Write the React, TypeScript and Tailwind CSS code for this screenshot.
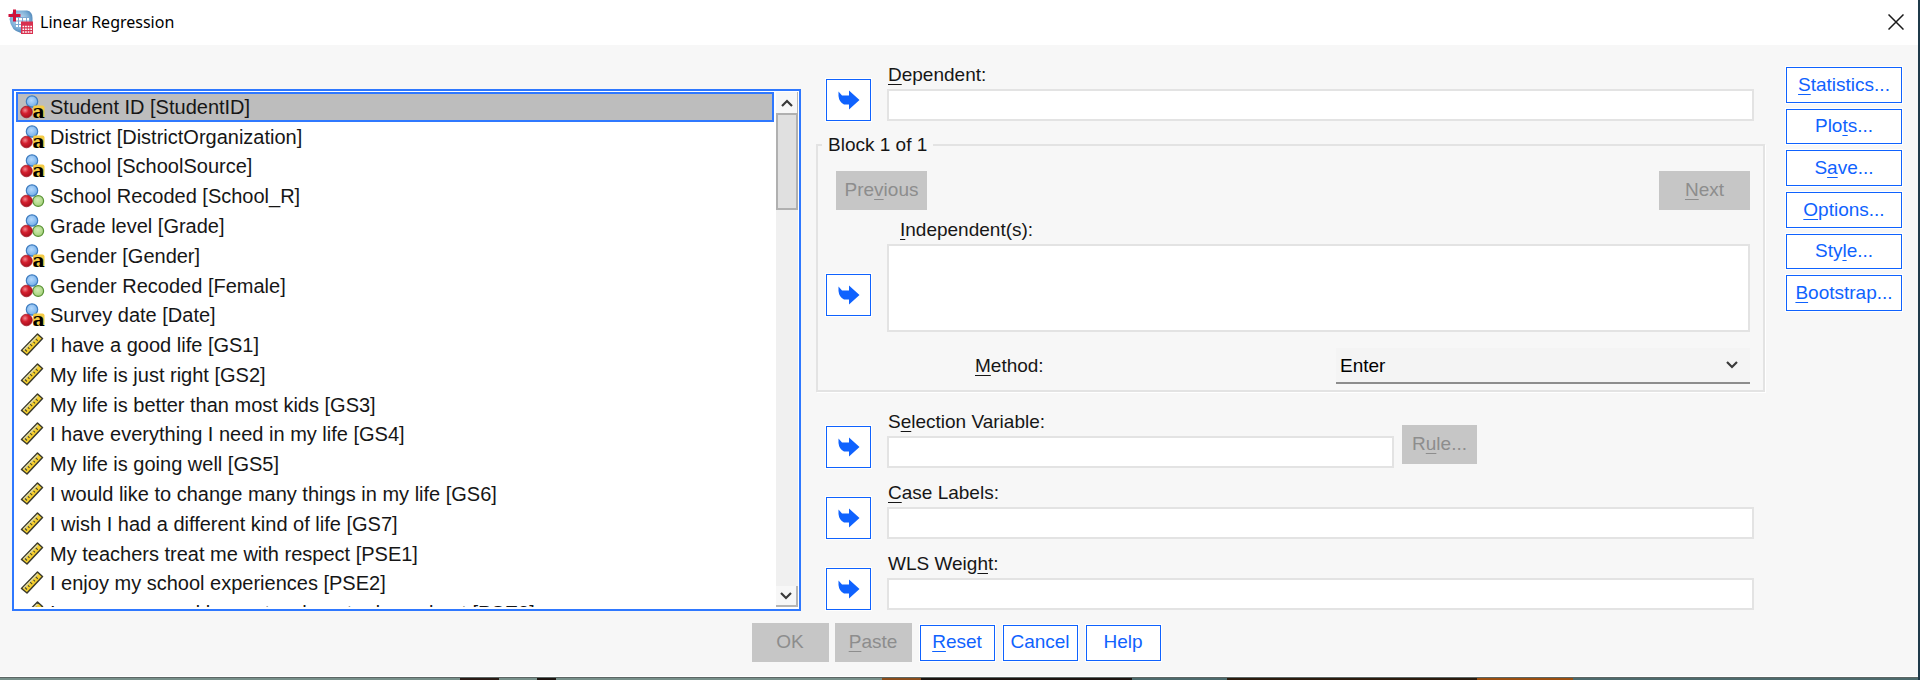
import React, { useState } from "react";

type Kind = "string" | "nominal" | "scale";

const variables: { kind: Kind; label: string }[] = [
  { kind: "string", label: "Student ID [StudentID]" },
  { kind: "string", label: "District [DistrictOrganization]" },
  { kind: "string", label: "School [SchoolSource]" },
  { kind: "nominal", label: "School Recoded [School_R]" },
  { kind: "nominal", label: "Grade level [Grade]" },
  { kind: "string", label: "Gender [Gender]" },
  { kind: "nominal", label: "Gender Recoded [Female]" },
  { kind: "string", label: "Survey date [Date]" },
  { kind: "scale", label: "I have a good life [GS1]" },
  { kind: "scale", label: "My life is just right [GS2]" },
  { kind: "scale", label: "My life is better than most kids [GS3]" },
  { kind: "scale", label: "I have everything I need in my life [GS4]" },
  { kind: "scale", label: "My life is going well [GS5]" },
  { kind: "scale", label: "I would like to change many things in my life [GS6]" },
  { kind: "scale", label: "I wish I had a different kind of life [GS7]" },
  { kind: "scale", label: "My teachers treat me with respect [PSE1]" },
  { kind: "scale", label: "I enjoy my school experiences [PSE2]" },
  { kind: "scale", label: "I am encouraged by my teachers to do my best [PSE3]" },
];

function AppIcon() {
  return (
    <svg width="26" height="26" viewBox="0 0 26 26" aria-hidden="true">
      <defs>
        <radialGradient id="globe" cx="0.45" cy="0.4" r="0.65">
          <stop offset="0" stopColor="#cfe2f2" />
          <stop offset="0.6" stopColor="#7fb0d8" />
          <stop offset="1" stopColor="#3f78ae" />
        </radialGradient>
      </defs>
      <path d="M7 1.500H19Q24.500 2.500 24.500 9V24H13Q3 22 1.500 10L4 4z" fill="url(#globe)" />
      <path d="M8 8H21V18H8z" fill="#fff" />
      <path d="M7 8.500H21M7 12H21M7 15.500H21M10.500 8v10M14.500 8v10M18.500 8v10" stroke="#7fa9d3" strokeWidth="1" />
      <path d="M6.500 0.500v12M0.500 6.500h12" stroke="#d0103a" strokeWidth="3" />
      <path d="M13 12.500h12V25H13z" fill="#d8304f" />
      <path d="M14.500 17.500h10M14.500 20.200h10M14.500 23h10" stroke="#fff" strokeWidth="1.600" strokeDasharray="1.700 0.900" />
    </svg>
  );
}

function VariableIcon({ kind }: { kind: Kind }) {
  if (kind === "scale") {
    return (
      <svg width="24" height="24" viewBox="0 0 24 24" className="shrink-0" aria-hidden="true">
        <path d="M1.500 17.500 17.500 1 22.500 5.500 7 22z" fill="#f5cf2e" stroke="#3a3a2c" strokeWidth="1.500" strokeLinejoin="round" />
        <path d="M3.500 17.300 17.600 3" stroke="#d9d5a8" strokeWidth="1.600" />
        <path d="m7 18.500-2-2M9.500 15.800l-1.500-1.500M12.200 13.200l-2-2M15 10.400l-1.500-1.500M17.800 7.800l-2-2" stroke="#4a4a30" strokeWidth="1.100" />
      </svg>
    );
  }
  return (
    <svg width="24" height="24" viewBox="0 0 24 24" className="shrink-0 overflow-visible" aria-hidden="true">
      <defs>
        <radialGradient id="blueBall" cx="0.45" cy="0.4" r="0.6">
          <stop offset="0" stopColor="#b5d8fb" />
          <stop offset="0.75" stopColor="#82b8ee" />
          <stop offset="1" stopColor="#6aa4e0" />
        </radialGradient>
        <radialGradient id="redBall" cx="0.38" cy="0.35" r="0.65">
          <stop offset="0" stopColor="#f08a92" />
          <stop offset="0.45" stopColor="#d4202f" />
          <stop offset="1" stopColor="#a80f1d" />
        </radialGradient>
        <radialGradient id="greenBall" cx="0.45" cy="0.4" r="0.6">
          <stop offset="0" stopColor="#d3edb4" />
          <stop offset="1" stopColor="#a3d07a" />
        </radialGradient>
      </defs>
      <circle cx="12" cy="6.500" r="5.700" fill="url(#blueBall)" stroke="#3f7dc0" strokeWidth="1.200" />
      {kind === "nominal" && <circle cx="18.200" cy="17" r="5.400" fill="url(#greenBall)" stroke="#5a9436" strokeWidth="1.200" />}
      <circle cx="6.500" cy="17" r="5.800" fill="url(#redBall)" stroke="#a01522" strokeWidth="0.800" />
      {kind === "string" && (
        <>
          <rect x="13" y="10.500" width="11.500" height="12.500" rx="2" fill="#f5cb45" />
          <text x="18.700" y="22.500" textAnchor="middle" fontSize="19" fontWeight="700" fontFamily="DejaVu Serif, serif" fill="#000">a</text>
        </>
      )}
    </svg>
  );
}

function MoveButton({ label }: { label: string }) {
  return (
    <button type="button" aria-label={label} className="flex h-[42px] w-[45px] shrink-0 items-center justify-center border border-[#0f62fe] bg-white shadow-[0_0_0_1px_#ffffff]">
      <svg width="22" height="20" viewBox="0 0 22 20" aria-hidden="true">
        <path d="M0.500 1.500 4 5.500H11V0.500L21.500 10 11 19.500V14.500H6Q1 12 0.500 6z" fill="#0f62fe" />
      </svg>
    </button>
  );
}

/* Text with one underlined access key */
function Key({ text, at }: { text: string; at: number }) {
  if (at < 0) return <span>{text}</span>;
  return (
    <span>
      {text.slice(0, at)}
      <span className="underline decoration-1 underline-offset-3">{text[at]}</span>
      {text.slice(at + 1)}
    </span>
  );
}

function OutlineButton({ text, at = -1, className }: { text: string; at?: number; className: string }) {
  return (
    <button type="button" className={`flex items-center justify-center border border-[#0f62fe] bg-white text-[#0f62fe] shadow-[0_0_0_1px_#ffffff] ${className}`}>
      <Key text={text} at={at} />
    </button>
  );
}

function DisabledButton({ text, at = -1, className }: { text: string; at?: number; className: string }) {
  return (
    <button type="button" disabled className={`flex h-[39px] items-center justify-center bg-[#c6c6c6] text-[#8d8d8d] ${className}`}>
      <Key text={text} at={at} />
    </button>
  );
}

function Field({ id, text, at, className, children }: { id: string; text: string; at: number; className: string; children?: React.ReactNode }) {
  return (
    <div className={`flex items-end gap-4 ${className}`}>
      <MoveButton label={`Move to ${text}`} />
      <div className="flex min-w-0 flex-1 flex-col">
        <label htmlFor={id} className="self-start pl-px leading-7"><Key text={text} at={at} /></label>
        <input id={id} type="text" className="h-8 w-full border-2 border-[#e3e3e3] bg-white px-2 outline-none" />
      </div>
      {children}
    </div>
  );
}

export default function App() {
  const [selected, setSelected] = useState(0);
  return (
    <div className="flex min-h-screen flex-col border-r-2 border-[#1f3a4a] bg-[#f7f7f7] font-['Liberation_Sans',Arial,sans-serif] text-[19px] text-[#161616]">
      <header className="flex h-[45px] items-center bg-white pr-3 pb-[2px] pl-2">
        <AppIcon />
        <h1 className="ml-[6px] flex-1 font-['Noto_Sans','Open_Sans',sans-serif] text-[16px] text-black">Linear Regression</h1>
        <button type="button" aria-label="Close" className="flex h-5 w-5 items-center justify-center">
          <svg width="16" height="16" viewBox="0 0 16 16" aria-hidden="true">
            <path d="M0.500 0.500 15.500 15.500M15.500 0.500 0.500 15.500" stroke="#1a1a1a" strokeWidth="1.500" />
          </svg>
        </button>
      </header>

      <main className="flex flex-1 flex-col border-b border-white pr-4 pl-3">
        <div className="flex">
          <section aria-label="Variables" className="mt-11 flex h-[522px] w-[789px] shrink-0 border-2 border-[#2f78ff] bg-white pt-px pr-px pb-[2px] pl-[2px]">
            <div className="min-w-0 flex-1 overflow-hidden">
              <ul role="listbox" aria-label="Variables" className="grid h-[536px] auto-rows-fr text-[20px] leading-6">
                {variables.map((v, i) => (
                  <li
                    key={v.label}
                    role="option"
                    aria-selected={i === selected}
                    onClick={() => setSelected(i)}
                    className={`flex items-center gap-[6px] border-2 pl-[2px] whitespace-nowrap ${i === selected ? "border-[#2f78ff] bg-[#bdbdbd]" : "border-transparent"}`}
                  >
                    <VariableIcon kind={v.kind} />
                    <span>{v.label}</span>
                  </li>
                ))}
              </ul>
            </div>
            <div className="ml-[2px] flex w-[22px] flex-col bg-[#f0f0f0]">
              <button type="button" aria-label="Scroll up" className="flex h-[21px] items-center justify-center border-r border-[#b5b5b5] bg-[#f7f7f7]">
                <svg width="12" height="8" viewBox="0 0 12 8" aria-hidden="true"><path d="M1 7 6 2l5 5" fill="none" stroke="#3a3a3a" strokeWidth="2.200" /></svg>
              </button>
              <div className="h-[97px] border-2 border-[#b0b0b0] bg-[#e0e0e0]" />
              <div className="flex-1" />
              <button type="button" aria-label="Scroll down" className="flex h-[21px] items-center justify-center border-r-2 border-b-2 border-[#b5b5b5] bg-[#f7f7f7]">
                <svg width="12" height="8" viewBox="0 0 12 8" aria-hidden="true"><path d="m1 1 5 5 5-5" fill="none" stroke="#3a3a3a" strokeWidth="2.200" /></svg>
              </button>
            </div>
          </section>

          <div className="ml-[15px] flex min-w-0 flex-1 flex-col pt-4">
            <Field id="dependent" text="Dependent:" at={0} className="mr-[11px] ml-[10px]" />

            <fieldset className="mt-[10px] min-w-0 border-2 border-[#e3e3e3] pr-[13px] pb-[6px] pl-2 shadow-[1px_1px_0_#ffffff]">
              <legend className="-ml-1 px-[6px] leading-7">Block 1 of 1</legend>
              <div className="mt-3 flex justify-between pl-[10px]">
                <DisabledButton text="Previous" at={3} className="w-[91px]" />
                <DisabledButton text="Next" at={0} className="w-[91px]" />
              </div>
              <div className="mt-[6px] ml-[74px] leading-7">
                <label htmlFor="independents"><Key text="Independent(s):" at={0} /></label>
              </div>
              <div className="flex items-end gap-4">
                <div className="pb-4">
                  <MoveButton label="Move to Independent(s)" />
                </div>
                <textarea id="independents" className="block h-[88px] min-w-0 flex-1 resize-none border-2 border-[#e3e3e3] bg-white outline-none" />
              </div>
              <div className="mt-4 flex items-center justify-between pl-[149px]">
                <label htmlFor="method"><Key text="Method:" at={0} /></label>
                <div className="relative w-[414px]">
                  <select id="method" className="h-9 w-full appearance-none border-b-2 border-[#8d8d8d] bg-[#f4f4f4] pt-[2px] pl-1 text-black outline-none">
                    <option>Enter</option>
                    <option>Stepwise</option>
                    <option>Remove</option>
                    <option>Backward</option>
                    <option>Forward</option>
                  </select>
                  <svg width="12" height="8" viewBox="0 0 12 8" className="pointer-events-none absolute top-[13px] right-3" aria-hidden="true"><path d="m1 1 5 5 5-5" fill="none" stroke="#3a3a3a" strokeWidth="2.200" /></svg>
                </div>
              </div>
            </fieldset>

            <Field id="selection" text="Selection Variable:" at={1} className="mt-4 mr-[288px] ml-[10px]">
              <DisabledButton text="Rule..." at={1} className="mb-1 -ml-2 w-[75px]" />
            </Field>
            <Field id="cases" text="Case Labels:" at={0} className="mt-[11px] mr-[11px] ml-[10px]" />
            <Field id="wls" text="WLS Weight:" at={8} className="mt-[11px] mr-[11px] ml-[10px]" />
          </div>

          <nav aria-label="Options" className="mt-[22px] ml-[21px] flex h-[244px] w-[116px] shrink-0 flex-col gap-[6px]">
            <OutlineButton text="Statistics..." at={0} className="w-full flex-1" />
            <OutlineButton text="Plots..." at={3} className="w-full flex-1" />
            <OutlineButton text="Save..." at={1} className="w-full flex-1" />
            <OutlineButton text="Options..." at={0} className="w-full flex-1" />
            <OutlineButton text="Style..." at={3} className="w-full flex-1" />
            <OutlineButton text="Bootstrap..." at={0} className="w-full flex-1" />
          </nav>
        </div>

        <div className="mt-3 flex items-center justify-center pr-[10px] pl-2">
          <DisabledButton text="OK" className="w-[77px]" />
          <DisabledButton text="Paste" at={0} className="ml-[6px] w-[77px]" />
          <OutlineButton text="Reset" at={0} className="ml-2 h-9 w-[75px]" />
          <OutlineButton text="Cancel" className="ml-2 h-9 w-[75px]" />
          <OutlineButton text="Help" className="ml-2 h-9 w-[75px]" />
        </div>
      </main>

      <div className="flex h-[3px] border-t border-[#5c6664] bg-[#78908a]">
        <div className="w-[24%]" />
        <div className="w-[2%] bg-[#2a1c16]" />
        <div className="w-[2%]" />
        <div className="w-[1%] bg-[#1c1410]" />
        <div className="w-[17%]" />
        <div className="w-[2%] bg-[#8a4d1c]" />
        <div className="w-[11%] bg-[#1c1410]" />
        <div className="w-[5%] bg-[#4d6a6c]" />
        <div className="w-[13%] bg-[#2b1c0e]" />
        <div className="w-[5%] bg-[#9a4f10]" />
        <div className="flex-1 bg-[#4d6a6c]" />
      </div>
    </div>
  );
}
